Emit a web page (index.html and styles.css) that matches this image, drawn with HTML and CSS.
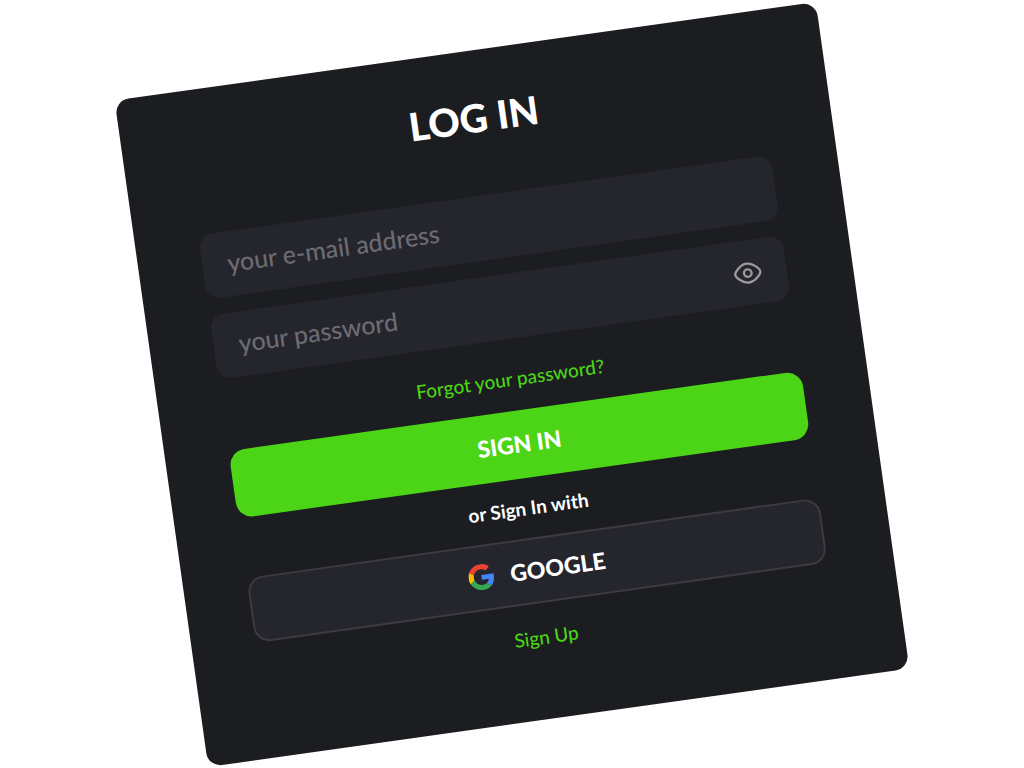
FILE: index.html
```html
<!DOCTYPE html>
<html lang="en">

<head>
    <meta charset="UTF-8">
    <meta name="viewport" content="width=device-width, initial-scale=1.0">
    <title>Log in</title>
    <link rel="stylesheet" href="styles.css">
</head>

<body>

    <main class="card">
        <h1 class="title">LOG IN</h1>

        <form class="login-form">
            <div class="field">
                <input class="field-input" type="email" placeholder="your e-mail address" aria-label="your e-mail address">
            </div>
            <div class="field">
                <input class="field-input" type="password" placeholder="your password" aria-label="your password">
                <button class="toggle" type="button" aria-label="Show password">
                    <svg width="28" height="24" viewBox="0 0 28 24" fill="none" stroke="currentColor" stroke-width="2.300">
                        <path d="M1.300 12C1.300 10 7 2.500 14 2.500S26.700 10 26.700 12 21 21.500 14 21.500 1.300 14 1.300 12z" />
                        <circle cx="14" cy="12" r="3.800" />
                    </svg>
                </button>
            </div>

            <a class="link forgot" href="#">Forgot your password?</a>

            <button class="btn btn-primary" type="submit">SIGN IN</button>

            <p class="divider">or Sign In with</p>

            <button class="btn btn-google" type="button">
                <svg width="26" height="26" viewBox="0 0 48 48">
                    <path fill="#EA4335" d="M24 9.500c3.540 0 6.710 1.220 9.210 3.600l6.850-6.850C35.900 2.380 30.470 0 24 0 14.620 0 6.510 5.380 2.560 13.220l7.980 6.190C12.430 13.720 17.740 9.500 24 9.500z" />
                    <path fill="#4285F4" d="M46.980 24.550c0-1.570-.15-3.090-.38-4.550H24v9.020h12.940c-.58 2.960-2.260 5.480-4.780 7.180l7.730 6c4.510-4.180 7.090-10.360 7.090-17.650z" />
                    <path fill="#FBBC05" d="M10.530 28.590c-.48-1.450-.76-2.990-.76-4.590s.27-3.140.76-4.590l-7.980-6.190C.92 16.460 0 20.120 0 24s.92 7.540 2.560 10.780l7.970-6.190z" />
                    <path fill="#34A853" d="M24 48c6.480 0 11.930-2.130 15.890-5.810l-7.730-6c-2.150 1.450-4.920 2.300-8.160 2.300-6.260 0-11.570-4.220-13.470-9.910l-7.980 6.190C6.510 42.620 14.620 48 24 48z" />
                </svg>
                GOOGLE
            </button>

            <a class="link signup" href="#">Sign Up</a>
        </form>
    </main>

</body>

</html>
```
FILE: styles.css
```css
* {
    box-sizing: border-box;
}

body {
    display: flex;
    align-items: center;
    justify-content: center;
    min-height: 100vh;
    margin: 0;
    font-family: Lato, "Liberation Sans", sans-serif;
    background-color: #ffffff;
    color: #ffffff;
    overflow: hidden;
}

.card {
    width: 100%;
    max-width: 708px;
    padding: 43px 66px 70px 64px;
    border-radius: 14px;
    background-color: #1c1d21;
    transform: rotate(-8deg);
}

.title {
    margin: 0 0 54px;
    font-size: 39px;
    line-height: 48px;
    font-weight: 900;
    text-align: center;
}

.login-form {
    display: flex;
    flex-direction: column;
    align-items: center;
}

.field {
    position: relative;
    width: 100%;
    margin-bottom: 16px;
}

.field-input {
    display: block;
    width: 100%;
    height: 65px;
    padding: 0 72px 3px 25px;
    border: none;
    border-radius: 14px;
    background-color: #25252d;
    color: #ffffff;
    font-family: inherit;
    font-size: 25px;
    font-weight: 500;
}

.field-input::placeholder {
    color: #6c6b72;
    opacity: 1;
}

/* eye icon sits over the password box */
.toggle {
    position: absolute;
    top: 0;
    right: 25px;
    display: flex;
    align-items: center;
    height: 100%;
    padding: 0;
    border: none;
    background: none;
    color: #9b9a9a;
    cursor: pointer;
}

.link {
    color: #4bd516;
    font-size: 19px;
    line-height: 24px;
    font-weight: 500;
    text-decoration: none;
}

.forgot {
    margin: 12px 0 20px;
}

.btn {
    display: flex;
    align-items: center;
    justify-content: center;
    gap: 16px;
    width: 100%;
    padding: 0 0 2px;
    border-radius: 16px;
    color: #ffffff;
    font-family: inherit;
    font-size: 23px;
    font-weight: 900;
    cursor: pointer;
}

.btn-primary {
    height: 68px;
    border: none;
    background-color: #4bd516;
}

.divider {
    margin: 18px 0;
    font-size: 19px;
    line-height: 24px;
    font-weight: bold;
}

.btn-google {
    height: 66px;
    border: 2px solid #3b3b40;
    background-color: #25252d;
}

.signup {
    margin-top: 22px;
}
```
